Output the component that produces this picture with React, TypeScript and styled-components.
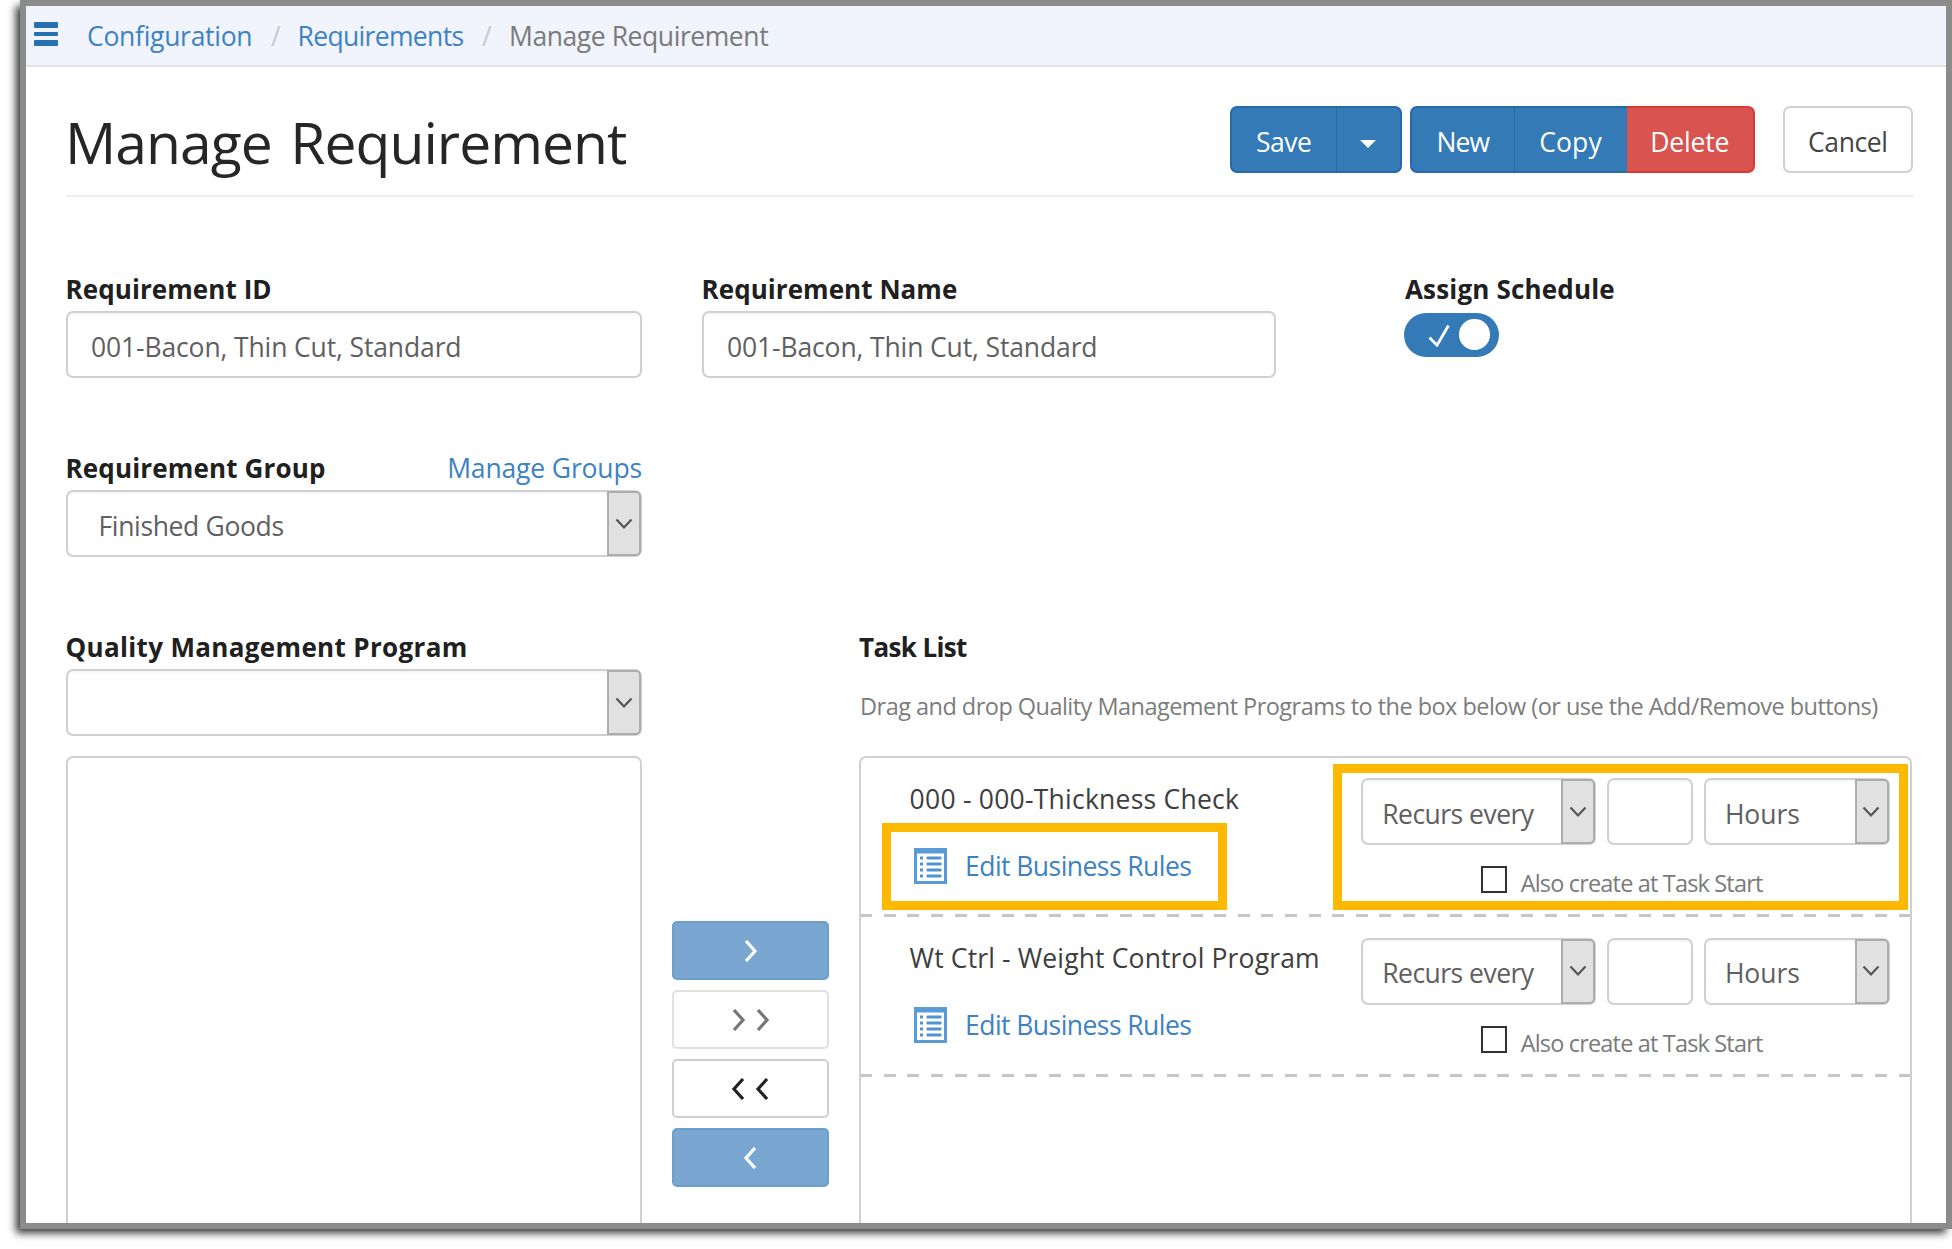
import React from 'react';
import styled, { createGlobalStyle, css } from 'styled-components';

const GlobalStyle = createGlobalStyle`
  *, *::before, *::after { box-sizing: border-box; }
  body { margin: 0; background: #fff; }
`;

const blue = '#337ab7';
const link = '#3c82c4';
const line = '#d0d0d0';

const Stage = styled.div`
  width: 1952px;
  height: 1249px;
  padding-left: 20px;
  overflow: hidden;
  background: #fff;
  font-family: 'Open Sans', 'Noto Sans', sans-serif;
  font-size: 26.5px;
  color: #333;
`;

const Window = styled.div`
  display: flex;
  flex-direction: column;
  width: 1932px;
  height: 1229px;
  border: 6px solid #8b8b8b;
  background: #fff;
  box-shadow: -5px 5px 8px -1px rgba(0, 0, 0, 0.8);
`;

const WindowBody = styled.div`
  flex: 1;
  min-height: 0;
  display: flex;
  flex-direction: column;
  overflow: hidden;
`;

const Text = styled.span<{ $ls?: number }>`
  white-space: nowrap;
  letter-spacing: ${(p) => p.$ls ?? 0}px;
`;

const TopBar = styled.header`
  flex: none;
  display: flex;
  align-items: center;
  height: 61px;
  padding: 0 0 0 8px;
  background: #f1f4fc;
  border-bottom: 2px solid #dfe2e6;
`;

const MenuIcon = styled.div`
  display: flex;
  flex-direction: column;
  justify-content: space-between;
  width: 24px;
  height: 24px;
  margin: -4px 29px 0 0;
`;

const MenuBar = styled.i<{ $h: number }>`
  height: ${(p) => p.$h}px;
  border-radius: 1px;
  background: #2470b3;
`;

const Crumbs = styled.nav`
  display: grid;
  grid-template-columns: 184px 26.5px 184.5px 27px auto;
  padding-top: 1px;
  line-height: 36px;
`;

const Crumb = styled(Text)<{ $kind: 'link' | 'sep' | 'current' }>`
  color: ${(p) => ({ link, sep: '#c9c9c9', current: '#7a7a7a' })[p.$kind]};
`;

const Main = styled.main`
  flex: 1;
  min-height: 0;
  display: flex;
  flex-direction: column;
  padding: 0 33.5px 0 40px;
`;

const TitleRow = styled.div`
  flex: none;
  display: flex;
  justify-content: space-between;
  align-items: flex-start;
  height: 130px;
  padding-top: 39px;
  border-bottom: 2px solid #ececec;
`;

const Title = styled.h1`
  margin: 1px 0 0 -1px;
  font-size: 57px;
  font-weight: 400;
  line-height: 70px;
  letter-spacing: -0.95px;
  word-spacing: 4.5px;
  color: #262626;
`;

const Actions = styled.div`
  display: flex;
`;

const ButtonGroup = styled.div`
  display: flex;
  margin-left: 8.5px;
`;

const tones = {
  primary: css`background: ${blue}; border-color: #2869a8; color: #fff;`,
  danger: css`background: #d9534f; border-color: #d93a35; color: #fff;`,
  plain: css`background: #fff; border-color: ${line}; color: #444;`,
};

const Button = styled.button<{ $w: number; $tone: keyof typeof tones; $ls?: number }>`
  display: flex;
  align-items: center;
  justify-content: center;
  width: ${(p) => p.$w}px;
  height: 67px;
  padding: 4px 0 0;
  border: 2px solid;
  border-radius: 0;
  font: inherit;
  letter-spacing: ${(p) => p.$ls ?? 0}px;
  ${(p) => tones[p.$tone]}
  &:not(:first-child) { border-left-width: ${(p) => (p.$tone === 'danger' ? 0 : 1)}px; }
  &:not(:last-child) { border-right-width: 0; }
  &:first-child { border-top-left-radius: 7px; border-bottom-left-radius: 7px; }
  &:last-child { border-top-right-radius: 7px; border-bottom-right-radius: 7px; }
`;

const CancelWrap = styled.div`
  margin-left: 28px;
`;

const Caret = styled.i`
  margin-top: 4px;
  border: 8px solid transparent;
  border-top-color: #fff;
  border-bottom: 0;
`;

const FieldRow = styled.div<{ $top: number }>`
  flex: none;
  display: flex;
  padding-top: ${(p) => p.$top}px;
`;

const Field = styled.div<{ $w?: number; $ml?: number }>`
  width: ${(p) => (p.$w ? `${p.$w}px` : 'auto')};
  margin-left: ${(p) => p.$ml ?? 0}px;
`;

const LabelRow = styled.div`
  display: flex;
  justify-content: space-between;
  height: 36px;
  margin-bottom: 4px;
  line-height: 36px;
`;

const Label = styled.label<{ $ls?: number; $dx?: number }>`
  margin-left: ${(p) => p.$dx ?? -0.5}px;
  font-size: 26px;
  font-weight: 700;
  white-space: nowrap;
  letter-spacing: ${(p) => p.$ls ?? 0}px;
  color: #202020;
`;

const GroupsLink = styled(Text)`
  color: ${link};
`;

const Box = styled.div<{ $w?: number; $pad?: number }>`
  display: flex;
  align-items: center;
  width: ${(p) => (p.$w ? `${p.$w}px` : '100%')};
  height: 67px;
  padding-left: ${(p) => p.$pad ?? 23}px;
  border: 2px solid ${line};
  border-radius: 7px;
  background: #fff;
  box-shadow: inset 0 2px 2px rgba(0, 0, 0, 0.04);
  color: #606060;
`;

const Value = styled(Text)`
  flex: 1;
  padding-top: 4px;
`;

const DropButton = styled.div`
  display: flex;
  align-items: center;
  justify-content: center;
  width: 34px;
  height: 65px;
  margin-right: -1px;
  padding-right: 1px;
  border: 2px solid #adadad;
  border-radius: 0 5px 5px 0;
  background: #e1e1e1;
`;

const DropDown = ({ w, pad, ls, children }: { w?: number; pad: number; ls?: number; children?: string }) => (
  <Box $w={w} $pad={pad}>
    <Value $ls={ls}>{children}</Value>
    <DropButton>
      <svg width="18" height="12" viewBox="0 0 18 12">
        <path d="M1.5 1.5 9 9.5 16.5 1.5" fill="none" stroke="#555" strokeWidth="2.2" />
      </svg>
    </DropButton>
  </Box>
);

const Toggle = styled.div`
  display: flex;
  align-items: center;
  justify-content: space-between;
  width: 95px;
  height: 44px;
  margin-top: 5.7px;
  padding: 0 9.5px 0 24px;
  border-radius: 22px;
  background: ${blue};
`;

const Knob = styled.i`
  width: 30.5px;
  height: 30.5px;
  border-radius: 50%;
  background: #fff;
`;

const Lower = styled.div`
  flex: 1;
  min-height: 0;
  display: flex;
  padding-top: 72px;
`;

const Column = styled.div<{ $w: number; $ml?: number }>`
  display: flex;
  flex-direction: column;
  width: ${(p) => p.$w}px;
  margin-left: ${(p) => p.$ml ?? 0}px;
`;

const ListBox = styled.div<{ $mt: number }>`
  flex: 1;
  margin-top: ${(p) => p.$mt}px;
  border: 2px solid ${line};
  border-bottom: 0;
  border-radius: 7px 7px 0 0;
`;

const Movers = styled.div`
  display: flex;
  flex-direction: column;
  gap: 9.7px;
  width: 157px;
  margin-left: 30px;
  padding-top: 292.2px;
`;

const Mover = styled.button<{ $filled?: boolean; $faded?: boolean }>`
  display: flex;
  align-items: center;
  justify-content: center;
  gap: 9px;
  height: 59.3px;
  padding: 0;
  border: 2px solid ${(p) => (p.$filled ? '#6c9fca' : p.$faded ? '#e1e1e1' : '#cfcfcf')};
  border-radius: 5px;
  background: ${(p) => (p.$filled ? '#79a7d1' : '#fff')};
  color: ${(p) => (p.$filled ? '#fff' : p.$faded ? '#777' : '#222')};
`;

const Chevron = ({ left }: { left?: boolean }) => (
  <svg width="15" height="22" viewBox="0 0 15 22">
    <path
      d={left ? 'M12 1 3 11 12 21' : 'M3 1 12 11 3 21'}
      fill="none"
      stroke="currentColor"
      strokeWidth="3.2"
    />
  </svg>
);

const Help = styled(Text)`
  margin: 18.5px 0 0 1px;
  font-size: 23.5px;
  line-height: 36px;
  color: #7c7c7c;
`;

const Item = styled.div`
  position: relative;
  display: flex;
  justify-content: space-between;
  height: 159.3px;
  padding: 0 20px 0 48.5px;
  background: repeating-linear-gradient(90deg, #c6c6c6 0 12px, transparent 12px 23.6px) -0.8px 100% / calc(100% + 1px) 3px no-repeat;
`;

const ItemInfo = styled.div`
  padding-top: 23px;
  line-height: 36px;
  color: #3e3e3e;
`;

const ItemName = styled(Text)`
  display: block;
`;

const RulesLink = styled.div`
  display: flex;
  align-items: center;
  gap: 18.5px;
  height: 36px;
  margin: 31px 0 0 4px;
  color: ${link};
`;

const ListIcon = () => (
  <svg width="33" height="36" viewBox="0 0 33 36">
    <rect width="33" height="36" fill="#5b9bd5" />
    <rect x="3" y="5.5" width="27" height="27.5" fill="#fff" />
    {[10, 16, 22, 28].map((y) => (
      <g key={y} fill="#4f94d2">
        <rect x="6" y={y - 1.5} width="3" height="3" />
        <rect x="12.5" y={y - 1.5} width="15" height="3" rx="1" />
      </g>
    ))}
  </svg>
);

const Schedule = styled.div`
  padding-top: 20.3px;
`;

const Controls = styled.div`
  display: flex;
  gap: 10.6px;
`;

const CheckRow = styled.label`
  display: flex;
  align-items: flex-start;
  gap: 13.5px;
  margin: 21px 0 0 119.5px;
  font-size: 23.5px;
  line-height: 34px;
  color: #7a7a7a;
`;

const Checkbox = styled.i`
  width: 26.5px;
  height: 27px;
  border: 2px solid #333;
  background: #fff;
`;

const Highlight = styled.div<{ $x: number; $y: number; $w: number; $h: number }>`
  position: absolute;
  left: ${(p) => p.$x}px;
  top: ${(p) => p.$y}px;
  width: ${(p) => p.$w}px;
  height: ${(p) => p.$h}px;
  border: 9.6px solid #fdb900;
  pointer-events: none;
`;

const TaskItem = ({ name, ls, marked }: { name: string; ls: number; marked?: boolean }) => (
  <Item>
    <ItemInfo>
      <ItemName $ls={ls}>{name}</ItemName>
      <RulesLink>
        <ListIcon />
        <Text $ls={-0.55}>Edit Business Rules</Text>
      </RulesLink>
    </ItemInfo>
    <Schedule>
      <Controls>
        <DropDown w={235} pad={19} ls={-0.52}>Recurs every</DropDown>
        <Box $w={86.5} />
        <DropDown w={186} pad={19} ls={-0.08}>Hours</DropDown>
      </Controls>
      <CheckRow>
        <Checkbox />
        <Text $ls={-0.83}>Also create at Task Start</Text>
      </CheckRow>
    </Schedule>
    {marked && (
      <>
        <Highlight $x={21} $y={65.3} $w={344.5} $h={86.3} />
        <Highlight $x={472} $y={6} $w={575.2} $h={145.7} />
      </>
    )}
  </Item>
);

export default function App() {
  return (
    <Stage>
      <GlobalStyle />
      <Window>
        <WindowBody>
          <TopBar>
            <MenuIcon>
              <MenuBar $h={6} />
              <MenuBar $h={4} />
              <MenuBar $h={6} />
            </MenuIcon>
            <Crumbs>
              <Crumb $kind="link" $ls={-0.29}>Configuration</Crumb>
              <Crumb $kind="sep">/</Crumb>
              <Crumb $kind="link" $ls={-0.66}>Requirements</Crumb>
              <Crumb $kind="sep">/</Crumb>
              <Crumb $kind="current" $ls={-0.43}>Manage Requirement</Crumb>
            </Crumbs>
          </TopBar>
          <Main>
            <TitleRow>
              <Title>Manage Requirement</Title>
              <Actions>
                <ButtonGroup>
                  <Button $w={105.5} $tone="primary" $ls={-0.42}>Save</Button>
                  <Button $w={66} $tone="primary"><Caret /></Button>
                </ButtonGroup>
                <ButtonGroup>
                  <Button $w={103.5} $tone="primary" $ls={-1}>New</Button>
                  <Button $w={113} $tone="primary" $ls={0.1}>Copy</Button>
                  <Button $w={128.5} $tone="danger" $ls={-0.19}>Delete</Button>
                </ButtonGroup>
                <CancelWrap>
                  <Button $w={129.5} $tone="plain" $ls={-0.44}>Cancel</Button>
                </CancelWrap>
              </Actions>
            </TitleRow>

            <FieldRow $top={74}>
              <Field $w={576}>
                <LabelRow><Label $ls={0.08}>Requirement ID</Label></LabelRow>
                <Box><Value $ls={-0.13}>001-Bacon, Thin Cut, Standard</Value></Box>
              </Field>
              <Field $w={574} $ml={60}>
                <LabelRow><Label $ls={0.06}>Requirement Name</Label></LabelRow>
                <Box><Value $ls={-0.13}>001-Bacon, Thin Cut, Standard</Value></Box>
              </Field>
              <Field $ml={128}>
                <LabelRow><Label $ls={0.17} $dx={1}>Assign Schedule</Label></LabelRow>
                <Toggle>
                  <svg width="22" height="24" viewBox="0 0 22 24">
                    <path d="M1.5 14.5 9 22.2 20.5 2.5" fill="none" stroke="#fff" strokeWidth="2.8" />
                  </svg>
                  <Knob />
                </Toggle>
              </Field>
            </FieldRow>

            <FieldRow $top={72}>
              <Field $w={576}>
                <LabelRow>
                  <Label $ls={0.16}>Requirement Group</Label>
                  <GroupsLink $ls={-0.15}>Manage Groups</GroupsLink>
                </LabelRow>
                <DropDown pad={30.5} ls={-0.35}>Finished Goods</DropDown>
              </Field>
            </FieldRow>

            <Lower>
              <Column $w={576}>
                <LabelRow><Label $ls={0.34}>Quality Management Program</Label></LabelRow>
                <DropDown pad={29.5} />
                <ListBox $mt={20} />
              </Column>
              <Movers>
                <Mover $filled><Chevron /></Mover>
                <Mover $faded><Chevron /><Chevron /></Mover>
                <Mover><Chevron left /><Chevron left /></Mover>
                <Mover $filled><Chevron left /></Mover>
              </Movers>
              <Column $w={1052.8} $ml={30.1}>
                <LabelRow><Label $ls={-0.64} $dx={0}>Task List</Label></LabelRow>
                <Help $ls={-0.53}>
                  Drag and drop Quality Management Programs to the box below (or use the Add/Remove buttons)
                </Help>
                <ListBox $mt={32.5}>
                  <TaskItem name="000 - 000-Thickness Check" ls={0.24} marked />
                  <TaskItem name="Wt Ctrl - Weight Control Program" ls={0.14} />
                </ListBox>
              </Column>
            </Lower>
          </Main>
        </WindowBody>
      </Window>
    </Stage>
  );
}
